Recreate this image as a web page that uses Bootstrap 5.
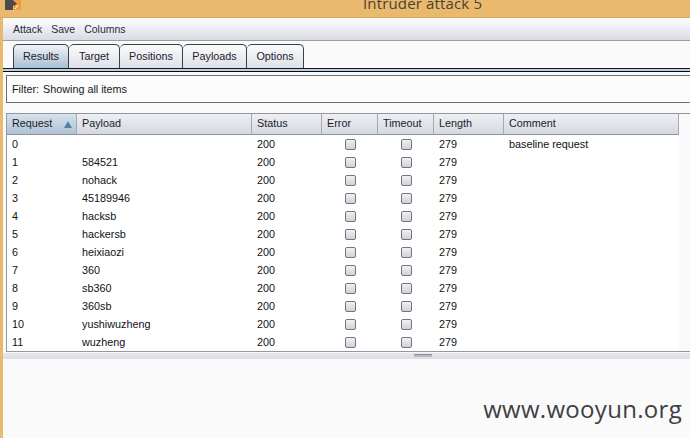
<!DOCTYPE html>
<html lang="en">
<head>
<meta charset="utf-8">
<title>Intruder attack 5</title>
<link href="https://cdn.jsdelivr.net/npm/bootstrap@5.3.0/dist/css/bootstrap.min.css" rel="stylesheet">
<style>
html,body{width:690px;height:438px;overflow:hidden;margin:0;background:#e9b96e}
body{font-family:"Liberation Sans",Arial,sans-serif;font-size:10.5px;color:#1a1a1a}
.titlebar{height:18px;overflow:hidden;background:#e9b96e;position:relative;flex:none;border-bottom:1px solid #d3a761}
.appicon{display:block;margin-left:5px}
.titletext{position:absolute;left:363px;top:-7px;font:15px/20px "Open Sans",sans-serif;color:#4a4236;letter-spacing:.15px;white-space:nowrap}
.appwin{margin-left:3px;height:420px;background:#fafafa;display:flex;flex-direction:column;overflow:hidden}
.menubar{height:23px;flex:none;background:linear-gradient(#fcfcfd,#f6f6f8 25%,#d9dbe3);border-bottom:1px solid #9a9da6;padding-left:10px;gap:9px;line-height:22px;color:#262a3a}
.tabstrip{height:27px;padding:3px 0 0 10px;flex:none;border:0;flex-wrap:nowrap;background:#fafafa}
.tabitem{height:24px;border:1px solid #3a3f4a;border-bottom:0;border-left:0;border-radius:5px 5px 0 0;background:linear-gradient(#fbfbfc,#dfe1e7);color:#1d2130;text-align:center;line-height:22px;display:block;padding:0;font-size:10.8px}
.tabitem.on{border-left:1px solid #3a3f4a;background:linear-gradient(#f1f3f6,#a8bfd3)}
.tw1{width:56px}.tw2{width:51px}.tw3{width:63px}.tw4{width:64px}.tw5{width:57px}
.tabband{height:4px;flex:none;background:#bcd0e2;border-top:1px solid #161a22;border-bottom:1px solid #0a0a0a;margin-bottom:3px}
.filterbox{height:28px;flex:none;margin-left:3px;margin-bottom:10px;border:1px solid #6c6e72;border-right:0;background:#fcfcfc;line-height:26px;padding-left:5px;color:#16181f;font-size:10.8px}
.filterbox span{margin-right:4px}
.gridwrap{height:239px;flex:none;margin-left:3px;border:1px solid #9397a1;border-right:0;background:#fafafa;overflow:hidden}
.resulttbl{table-layout:fixed;border-collapse:separate;border-spacing:0;width:672px;margin:0;background:#fff;font-size:10.8px}
.resulttbl th{height:21px;padding:0 0 2px 5px;font-weight:400;background:linear-gradient(#eef0f3,#d5d8e0);border:0;border-right:1px solid #a4a8b2;border-bottom:1px solid #8e929c;color:#1a1d28;position:relative;white-space:nowrap;vertical-align:middle}
.resulttbl th.sorted{background:linear-gradient(#d7e2ec,#aec2d4)}
.sorttri{position:absolute;left:57px;top:7px;width:0;height:0;border-left:4px solid transparent;border-right:4px solid transparent;border-bottom:7px solid #4f81ad}
.resulttbl td{height:18px;padding:0 0 0 5px;border:0;background:#fff;color:#111;line-height:18px;vertical-align:middle;white-space:nowrap}
.resulttbl td.ck{padding:0;text-align:center}
.ckbox{display:block;width:11px;height:11px;border:1px solid #6f747e;border-radius:2px;background:linear-gradient(#f2f2f4,#cfd1d6);margin:4px auto 3px;float:none;appearance:none;-webkit-appearance:none}
.splitbar{height:7px;flex:none;background:linear-gradient(#f8f8f9 1px,#e6e7ea 1px,#dcdee3);display:flex;justify-content:center;padding-left:152px}
.splitgrip{width:18px;height:3px;margin-top:2px;background:#b7bac1;border-top:1px solid #8e929b}
.lowerpane{flex:1;background:#fafafa;display:flex;justify-content:flex-end;align-items:flex-start;padding:35px 8px 0 0}
.wmark{font:24px/30px "Open Sans",sans-serif;color:#3f3f42;letter-spacing:.3px}
</style>
</head>
<body class="d-flex flex-column">
<div class="titlebar">
  <svg class="appicon" width="16" height="10" viewBox="0 0 16 10"><rect x="9" y="0" width="7" height="10" fill="#f39a3d"/><path d="M0 0H8L12 4 8 6V10H0Z" fill="#4c4c50"/><path d="M10 9l3-4" stroke="#fff" stroke-width="1" fill="none"/></svg>
  <div class="titletext">Intruder attack 5</div>
</div>
<div class="appwin">
  <div class="menubar d-flex"><span>Attack</span><span>Save</span><span>Columns</span></div>
  <ul class="nav tabstrip">
    <li class="nav-item"><a class="tabitem on tw1 text-decoration-none">Results</a></li>
    <li class="nav-item"><a class="tabitem tw2 text-decoration-none">Target</a></li>
    <li class="nav-item"><a class="tabitem tw3 text-decoration-none">Positions</a></li>
    <li class="nav-item"><a class="tabitem tw4 text-decoration-none">Payloads</a></li>
    <li class="nav-item"><a class="tabitem tw5 text-decoration-none">Options</a></li>
  </ul>
  <div class="tabband"></div>
  <div class="filterbox"><span>Filter:</span>Showing all items</div>
  <div class="gridwrap">
    <table class="table resulttbl">
      <colgroup><col style="width:70px"><col style="width:175px"><col style="width:70px"><col style="width:56px"><col style="width:56px"><col style="width:70px"><col style="width:175px"></colgroup>
      <thead><tr><th class="sorted">Request<span class="sorttri"></span></th><th>Payload</th><th>Status</th><th>Error</th><th>Timeout</th><th>Length</th><th>Comment</th></tr></thead>
      <tbody>
        <tr><td>0</td><td></td><td>200</td><td class="ck"><input class="ckbox" type="checkbox"></td><td class="ck"><input class="ckbox" type="checkbox"></td><td>279</td><td>baseline request</td></tr>
        <tr><td>1</td><td>584521</td><td>200</td><td class="ck"><input class="ckbox" type="checkbox"></td><td class="ck"><input class="ckbox" type="checkbox"></td><td>279</td><td></td></tr>
        <tr><td>2</td><td>nohack</td><td>200</td><td class="ck"><input class="ckbox" type="checkbox"></td><td class="ck"><input class="ckbox" type="checkbox"></td><td>279</td><td></td></tr>
        <tr><td>3</td><td>45189946</td><td>200</td><td class="ck"><input class="ckbox" type="checkbox"></td><td class="ck"><input class="ckbox" type="checkbox"></td><td>279</td><td></td></tr>
        <tr><td>4</td><td>hacksb</td><td>200</td><td class="ck"><input class="ckbox" type="checkbox"></td><td class="ck"><input class="ckbox" type="checkbox"></td><td>279</td><td></td></tr>
        <tr><td>5</td><td>hackersb</td><td>200</td><td class="ck"><input class="ckbox" type="checkbox"></td><td class="ck"><input class="ckbox" type="checkbox"></td><td>279</td><td></td></tr>
        <tr><td>6</td><td>heixiaozi</td><td>200</td><td class="ck"><input class="ckbox" type="checkbox"></td><td class="ck"><input class="ckbox" type="checkbox"></td><td>279</td><td></td></tr>
        <tr><td>7</td><td>360</td><td>200</td><td class="ck"><input class="ckbox" type="checkbox"></td><td class="ck"><input class="ckbox" type="checkbox"></td><td>279</td><td></td></tr>
        <tr><td>8</td><td>sb360</td><td>200</td><td class="ck"><input class="ckbox" type="checkbox"></td><td class="ck"><input class="ckbox" type="checkbox"></td><td>279</td><td></td></tr>
        <tr><td>9</td><td>360sb</td><td>200</td><td class="ck"><input class="ckbox" type="checkbox"></td><td class="ck"><input class="ckbox" type="checkbox"></td><td>279</td><td></td></tr>
        <tr><td>10</td><td>yushiwuzheng</td><td>200</td><td class="ck"><input class="ckbox" type="checkbox"></td><td class="ck"><input class="ckbox" type="checkbox"></td><td>279</td><td></td></tr>
        <tr><td>11</td><td>wuzheng</td><td>200</td><td class="ck"><input class="ckbox" type="checkbox"></td><td class="ck"><input class="ckbox" type="checkbox"></td><td>279</td><td></td></tr>
      </tbody>
    </table>
  </div>
  <div class="splitbar"><div class="splitgrip"></div></div>
  <div class="lowerpane"><div class="wmark">www.wooyun.org</div></div>
</div>
<script src="https://cdn.jsdelivr.net/npm/bootstrap@5.3.0/dist/js/bootstrap.bundle.min.js"></script>
</body>
</html>
